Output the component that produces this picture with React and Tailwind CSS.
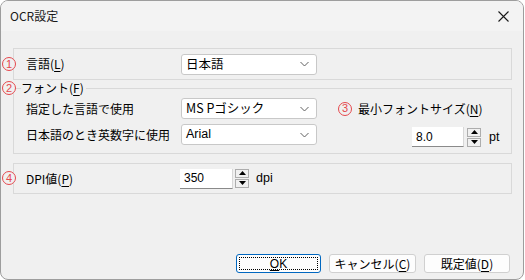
import React from "react";

const jp = { fontFamily: '"Noto Sans CJK JP", "Noto Sans", sans-serif' };
const lat = { fontFamily: '"Liberation Sans", Arial, sans-serif' };

function Num({ n, className = "" }) {
  return (
    <span
      className={`absolute flex h-[14px] w-[14px] items-center justify-center rounded-full border border-[#e5484d] bg-[#f0f0f0] text-[11px] leading-none text-[#e5484d] ${className}`}
      style={lat}
    >
      {n}
    </span>
  );
}

function U({ children }) {
  return <span className="underline underline-offset-[2px]">{children}</span>;
}

function Chevron() {
  return (
    <svg width="9" height="5" viewBox="0 0 9 5" className="absolute right-[7px] top-1/2 -translate-y-1/2">
      <path d="M0.5 0.5 L4.5 4.5 L8.5 0.5" fill="none" stroke="#606060" strokeWidth="1" />
    </svg>
  );
}

function Select({ value, font }) {
  return (
    <div className="relative flex h-[21px] w-[136px] items-center rounded-[3px] border border-[#c8c8c8] bg-white pl-[4px] text-[12.5px] text-black" style={font}>
      {value}
      <Chevron />
    </div>
  );
}

function Spin() {
  return (
    <div className="flex flex-col gap-[1px]">
      <div className="flex h-[9px] w-[14px] items-center justify-center border border-[#adadad] bg-[#f0f0f0]">
        <svg width="7" height="4" viewBox="0 0 7 4"><path d="M0 4 L3.5 0 L7 4 Z" fill="#000" /></svg>
      </div>
      <div className="flex h-[9px] w-[14px] items-center justify-center border border-[#adadad] bg-[#f0f0f0]">
        <svg width="7" height="4" viewBox="0 0 7 4"><path d="M0 0 L3.5 4 L7 0 Z" fill="#000" /></svg>
      </div>
    </div>
  );
}

function NumInput({ value, w }) {
  return (
    <div className={`flex h-[20px] ${w} items-center border-b border-r border-[#8a8a8a] border-r-[#d8d8d8] bg-white pl-[4px] text-[12px] text-black`} style={lat}>
      {value}
    </div>
  );
}

export default function App() {
  return (
    <div className="h-[280px] w-[525px] bg-white">
      <div className="h-[280px] w-[524px] overflow-hidden rounded-[8px] border border-[#9d9d9d] bg-[#f0f0f0] text-[12px] text-black" style={jp}>
        <div className="flex h-[30px] items-center justify-between bg-[#f3f3f3] pl-[9px] pr-[14px]">
          <span className="text-[12px] text-[#1a1a1a]">OCR設定</span>
          <svg width="11" height="11" viewBox="0 0 11 11">
            <path d="M0.5 0.5 L10.5 10.5 M10.5 0.5 L0.5 10.5" stroke="#1a1a1a" strokeWidth="1.1" />
          </svg>
        </div>

        <div className="flex flex-col pl-[12px] pt-[17px]">
          {/* Group 1 */}
          <div className="relative flex h-[32px] w-[499px] items-center border border-[#d9d9d9] pl-[12px]">
            <Num n="1" className="-left-[12px] top-[8px]" />
            <span className="w-[155px]">言語(<U>L</U>)</span>
            <Select value="日本語" font={jp} />
          </div>

          {/* Group 2 */}
          <div className="relative mt-[8px] flex h-[66px] w-[499px] flex-col border border-[#d9d9d9] pl-[12px] pt-[9px]">
            <Num n="2" className="-left-[12px] -top-[8px]" />
            <span className="absolute -top-[9px] left-[7px] bg-[#f0f0f0] pr-[2px] leading-[16px]">フォント(<U>F</U>)</span>
            <div className="flex h-[21px] items-center">
              <span className="w-[155px]">指定した言語で使用</span>
              <Select value="MS Pゴシック" font={jp} />
              <div className="relative ml-[21px] flex items-center pl-[20px]">
                <Num n="3" className="left-0 top-[2px]" />
                <span>最小フォントサイズ(<U>N</U>)</span>
              </div>
            </div>
            <div className="mt-[5px] flex h-[21px] items-center">
              <span className="w-[155px]">日本語のとき英数字に使用</span>
              <Select value="Arial" font={lat} />
              <div className="ml-[95px] mt-[5px] flex items-center">
                <NumInput value="8.0" w="w-[52px]" />
                <div className="ml-[3px]"><Spin /></div>
                <span className="ml-[8px] text-[12.5px]" style={lat}>pt</span>
              </div>
            </div>
          </div>

          {/* Group 3 */}
          <div className="relative mt-[9px] flex h-[31px] w-[499px] items-center border border-[#d9d9d9] pl-[12px]">
            <Num n="4" className="-left-[12px] top-[7px]" />
            <span className="w-[154px]">DPI値(<U>P</U>)</span>
            <NumInput value="350" w="w-[53px]" />
            <div className="ml-[2px] -mt-[1px]"><Spin /></div>
            <span className="ml-[7px] text-[12.5px]" style={lat}>dpi</span>
          </div>

          {/* Buttons */}
          <div className="mt-[60px] flex gap-[8px] pl-[223px]">
            <div className="flex h-[19px] w-[85px] items-center justify-center rounded-[3px] border border-[#0067c0] bg-[#fdfdfd] p-[2px]">
              <div className="flex h-full w-full items-center justify-center border border-dotted border-black text-[12px] leading-none" style={lat}>
                <U>O</U>K
              </div>
            </div>
            <div className="flex h-[19px] w-[87px] items-center justify-center rounded-[3px] border border-[#d0d0d0] bg-[#fdfdfd] text-[12px] leading-none">
              キャンセル(<U>C</U>)
            </div>
            <div className="flex h-[19px] w-[86px] items-center justify-center rounded-[3px] border border-[#d0d0d0] bg-[#fdfdfd] text-[12px] leading-none">
              既定値(<U>D</U>)
            </div>
          </div>
        </div>
      </div>
    </div>
  );
}
